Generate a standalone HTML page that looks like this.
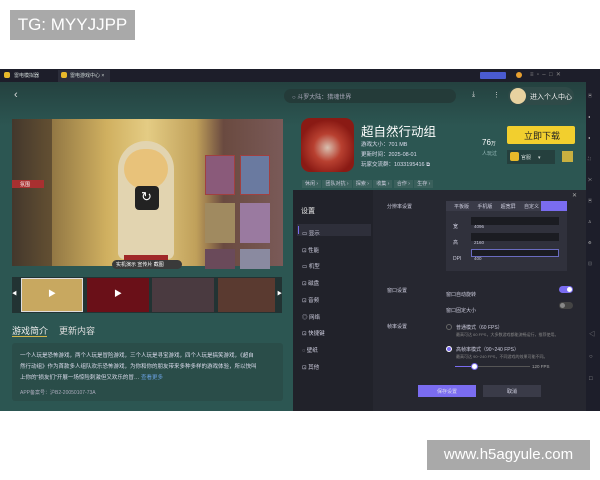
<!DOCTYPE html>
<html><head><meta charset="utf-8"><style>
*{margin:0;padding:0;box-sizing:border-box}
body{width:600px;height:480px;background:#fff;position:relative;overflow:hidden;font-family:"Liberation Sans","Noto Sans CJK SC",sans-serif;}
.a{position:absolute}
.t{color:#cfd8d6;font-size:6px;white-space:nowrap}
</style></head><body>
<div class="a" style="left:10px;top:10px;width:125px;height:30px;background:#a9a9a9;color:#fff;font-size:17px;line-height:30px;text-align:center">TG: MYYJJPP</div>
<div class="a" style="left:427px;top:440px;width:163px;height:30px;background:#a9a9a9;color:#fff;font-size:15px;line-height:30px;text-align:center">www.h5agyule.com</div>

<div class="a" style="left:0;top:69px;width:600px;height:342px;background:#2c5652;overflow:hidden">
 <div class="a" style="left:0;top:0;width:600px;height:13px;background:#1d1e2a"></div>
 <div class="a" style="left:4px;top:3px;width:6px;height:6px;border-radius:2px;background:#e8b92a"></div>
 <div class="a t" style="left:14px;top:3px;font-size:5px">雷电模拟器</div>
 <div class="a" style="left:58px;top:1px;width:52px;height:12px;background:#2b2d3a"></div>
 <div class="a" style="left:61px;top:3px;width:6px;height:6px;border-radius:2px;background:#e8b92a"></div>
 <div class="a t" style="left:70px;top:3px;font-size:5px">雷电游戏中心 ×</div>
 <div class="a" style="left:480px;top:3px;width:26px;height:7px;background:#4a5bd0;border-radius:1px"></div>
 <div class="a" style="left:516px;top:3px;width:6px;height:6px;border-radius:3px;background:#e8a030"></div>
 <div class="a t" style="left:530px;top:2px;color:#888">≡ &nbsp;▫ &nbsp;– &nbsp;□ &nbsp;✕</div>
 <div class="a" style="left:0;top:13px;width:600px;height:44px;background:linear-gradient(#24413f,#2c5652)"></div>
 <div class="a t" style="left:14px;top:20px;font-size:11px;color:#ddd">‹</div>
 <div class="a" style="left:284px;top:20px;width:172px;height:14px;border-radius:7px;background:#243b39"></div>
 <div class="a t" style="left:292px;top:23px;font-size:6px;color:#aab">○ 斗罗大陆：猎魂世界</div>
 <div class="a t" style="left:472px;top:22px;font-size:7px;color:#ddd">⤓</div>
 <div class="a t" style="left:493px;top:22px;font-size:7px;color:#ddd">⋮</div>
 <div class="a" style="left:508px;top:18px;width:66px;height:18px;border-radius:9px;background:#2f4a48"></div>
 <div class="a" style="left:510px;top:19px;width:16px;height:16px;border-radius:8px;background:#e8d2a0"></div>
 <div class="a t" style="left:530px;top:23px;font-size:7px;color:#eee">进入个人中心</div>

 <!-- screenshot -->
 <div class="a" style="left:12px;top:50px;width:271px;height:147px;background:linear-gradient(90deg,#5a4c38 0,#8a7040 12%,#d0b060 35%,#e4cc84 50%,#c0a05a 68%,#6a4a40 78%,#7a5a58 100%)"></div>
 <div class="a" style="left:12px;top:50px;width:40px;height:147px;background:rgba(40,30,30,.45)"></div>
 <div class="a" style="left:12px;top:111px;width:32px;height:8px;background:#a83030"></div>
 <div class="a t" style="left:20px;top:112px;font-size:5px;color:#fff">氛围</div>
 <div class="a" style="left:118px;top:72px;width:56px;height:118px;border-radius:28px 28px 6px 6px;background:#e2d4b0"></div>
 <div class="a" style="left:124px;top:80px;width:44px;height:40px;border-radius:20px;background:#e8c27a"></div>
 <div class="a" style="left:135px;top:117px;width:24px;height:24px;border-radius:4px;background:#222"></div>
 <div class="a t" style="left:141px;top:120px;font-size:13px;color:#fff">↻</div>
 <div class="a" style="left:124px;top:186px;width:44px;height:9px;background:#a02828"></div>
 <div class="a" style="left:205px;top:86px;width:30px;height:40px;background:#8a5a7a;border:1px solid #a04040"></div>
 <div class="a" style="left:240px;top:86px;width:30px;height:40px;background:#6a7aa0;border:1px solid #a04040"></div>
 <div class="a" style="left:205px;top:134px;width:30px;height:40px;background:#a08a60"></div>
 <div class="a" style="left:240px;top:134px;width:30px;height:40px;background:#9a7aa0"></div>
 <div class="a" style="left:205px;top:180px;width:30px;height:20px;background:#6a4a5a"></div>
 <div class="a" style="left:240px;top:180px;width:30px;height:20px;background:#8a8aa0"></div>
 <div class="a" style="left:112px;top:191px;width:70px;height:9px;border-radius:5px;background:#3a3a3a"></div>
 <div class="a t" style="left:116px;top:192px;font-size:5px;color:#fff">实机演示 宣传片 截图</div>
 <!-- thumbs -->
 <div class="a" style="left:12px;top:208px;width:270px;height:36px;background:#233"></div>
 <div class="a" style="left:21px;top:209px;width:62px;height:34px;background:#c8a860;border:1px solid #ddd"></div>
 <div class="a" style="left:87px;top:209px;width:62px;height:34px;background:#6a1018"></div>
 <div class="a" style="left:152px;top:209px;width:62px;height:34px;background:#4a3a40"></div>
 <div class="a" style="left:218px;top:209px;width:57px;height:34px;background:#5a3a30"></div>
 <div class="a t" style="left:48px;top:219px;font-size:8px;color:#fff">▶</div>
 <div class="a t" style="left:114px;top:219px;font-size:8px;color:#fff">▶</div>
 <div class="a t" style="left:12px;top:221px;font-size:5px;color:#fff">◀</div>
 <div class="a t" style="left:277px;top:221px;font-size:5px;color:#fff">▶</div>
 <div class="a t" style="left:12px;top:255px;font-size:9px;color:#eee">游戏简介</div>
 <div class="a" style="left:12px;top:267px;width:35px;height:1px;background:#d4b44a"></div>
 <div class="a t" style="left:59px;top:255px;font-size:9px;color:#ddd">更新内容</div>
 <div class="a" style="left:12px;top:274px;width:271px;height:58px;background:#2a4d49;border-radius:3px"></div>
 <div class="a t" style="left:20px;top:282px;font-size:5.5px;line-height:11px;color:#dde">一个人玩是恐怖游戏，两个人玩是冒险游戏，三个人玩是寻宝游戏，四个人玩是搞笑游戏，《超自<br>然行动组》作为首款多人组队欢乐恐怖游戏，为你和你的朋友带来多种多样的游戏体验，所以快叫<br>上你的"损友们"开展一场惊险刺激但又欢乐的冒… <span style="color:#6aa0e0">查看更多</span></div>
 <div class="a t" style="left:20px;top:320px;font-size:5px;color:#aab">APP备案号：沪B2-20050107-73A</div>

 <!-- game info -->
 <div class="a" style="left:301px;top:49px;width:53px;height:54px;border-radius:9px;background:radial-gradient(circle at 50% 55%,#d8c0b0 0,#b84030 35%,#8a1a14 70%)"></div>
 <div class="a t" style="left:361px;top:52px;font-size:12.5px;color:#fff">超自然行动组</div>
 <div class="a t" style="left:361px;top:71px;font-size:5.5px;line-height:10px;color:#dde">游戏大小：701 MB<br>更新时间：2025-08-01<br>玩家交流群：1033195416 ⧉</div>
 <div class="a t" style="left:482px;top:69px;font-size:8px;color:#fff">76<span style="font-size:5px">万</span></div>
 <div class="a t" style="left:482px;top:81px;font-size:5px;color:#9bb">人玩过</div>
 <div class="a" style="left:507px;top:57px;width:68px;height:18px;background:#f2cf2e;border-radius:2px"></div>
 <div class="a t" style="left:524px;top:60px;font-size:9px;color:#222">立即下载</div>
 <div class="a" style="left:507px;top:81px;width:48px;height:14px;background:#25403e"></div>
 <div class="a" style="left:510px;top:83px;width:9px;height:9px;background:#e8b92a;border-radius:2px"></div>
 <div class="a t" style="left:521px;top:85px;font-size:5px">官服 &nbsp; &nbsp; ▾</div>
 <div class="a" style="left:562px;top:82px;width:11px;height:11px;background:#c8b040"></div>
 <div class="a t" style="left:302px;top:111px;font-size:5px;color:#ccd">
  <span style="background:#3a605c;padding:1px 3px">休闲 ›</span> <span style="background:#3a605c;padding:1px 3px">团队对抗 ›</span> <span style="background:#3a605c;padding:1px 3px">探索 ›</span> <span style="background:#3a605c;padding:1px 3px">收集 ›</span> <span style="background:#3a605c;padding:1px 3px">合作 ›</span> <span style="background:#3a605c;padding:1px 3px">生存 ›</span></div>

 <!-- right sidebar -->
 <div class="a" style="left:586px;top:13px;width:14px;height:329px;background:#1d1e2a"></div>
 <div class="a t" style="left:588px;top:16px;font-size:4px;line-height:21px;color:#bbb">▣<br>◂<br>◂<br>⛶<br>✂<br>▣<br>♙<br>⚙<br>▤</div>
 <div class="a t" style="left:589px;top:255px;font-size:6px;line-height:22px;color:#999">◁<br>○<br>□</div>

 <!-- settings panel -->
 <div class="a" style="left:293px;top:121px;width:293px;height:221px;background:#262730"></div>
 <div class="a" style="left:293px;top:121px;width:80px;height:221px;background:#21222a"></div>
 <div class="a t" style="left:301px;top:137px;font-size:7px;color:#eee">设置</div>
 <div class="a" style="left:297px;top:155px;width:74px;height:12px;background:#2e2f3a"></div>
 <div class="a" style="left:298px;top:157px;width:1px;height:8px;background:#7a6cf0"></div>
 <div class="a t" style="left:302px;top:157px;font-size:5.5px;line-height:16.7px;color:#ccd">▭ 显示<br>⊡ 性能<br>▭ 机型<br>⊡ 磁盘<br>⊡ 音频<br>◎ 网络<br>⊡ 快捷键<br>◌ 壁纸<br>⊡ 其他</div>
 <div class="a t" style="left:572px;top:123px;font-size:6px;color:#aaa">✕</div>
 <div class="a t" style="left:387px;top:134px;font-size:5px;color:#ccd">分辨率设置</div>
 <div class="a" style="left:446px;top:132px;width:121px;height:70px;background:#30313c"></div>
 <div class="a" style="left:446px;top:132px;width:121px;height:10px;background:#3a3b48"></div>
 <div class="a" style="left:541px;top:132px;width:26px;height:10px;background:#7a6cf0"></div>
 <div class="a t" style="left:454px;top:134px;font-size:5px;color:#ccd">平板版 &nbsp; &nbsp; &nbsp;手机版 &nbsp; &nbsp; &nbsp;超宽屏 &nbsp; &nbsp; &nbsp;自定义</div>
 <div class="a t" style="left:453px;top:150px;font-size:5px;line-height:16px;color:#ccd">宽<br>高<br>DPI</div>
 <div class="a" style="left:471px;top:148px;width:88px;height:8px;background:#1b1c22"></div>
 <div class="a" style="left:471px;top:164px;width:88px;height:8px;background:#1b1c22"></div>
 <div class="a" style="left:471px;top:180px;width:88px;height:8px;background:#1b1c22;border:1px solid #6a6cc0"></div>
 <div class="a t" style="left:474px;top:150px;font-size:4.5px;line-height:16px;color:#ccd">4096<br>2160<br>400</div>
 <div class="a t" style="left:387px;top:218px;font-size:5px;color:#ccd">窗口设置</div>
 <div class="a t" style="left:446px;top:218px;font-size:5px;line-height:16px;color:#ccd">窗口自动旋转<br>窗口固定大小</div>
 <div class="a" style="left:559px;top:217px;width:14px;height:7px;border-radius:4px;background:#7a6cf0"></div>
 <div class="a" style="left:567px;top:218px;width:5px;height:5px;border-radius:3px;background:#fff"></div>
 <div class="a" style="left:559px;top:233px;width:14px;height:7px;border-radius:4px;background:#444"></div>
 <div class="a" style="left:560px;top:234px;width:5px;height:5px;border-radius:3px;background:#888"></div>
 <div class="a t" style="left:387px;top:254px;font-size:5px;color:#ccd">帧率设置</div>
 <div class="a" style="left:446px;top:255px;width:6px;height:6px;border-radius:3px;border:1px solid #666"></div>
 <div class="a t" style="left:456px;top:255px;font-size:5px;color:#ccd">普通模式（60 FPS）</div>
 <div class="a t" style="left:456px;top:263px;font-size:4px;color:#888">最高可达 60 FPS，大多数游戏都能流畅运行，推荐使用。</div>
 <div class="a" style="left:446px;top:277px;width:6px;height:6px;border-radius:3px;background:#7a6cf0;border:1px solid #fff"></div>
 <div class="a t" style="left:456px;top:277px;font-size:5px;color:#ccd">高帧率模式（90~240 FPS）</div>
 <div class="a t" style="left:456px;top:285px;font-size:4px;color:#888">最高可达 90~240 FPS，不同游戏的效果可能不同。</div>
 <div class="a" style="left:455px;top:297px;width:75px;height:1px;background:#555"></div>
 <div class="a" style="left:455px;top:297px;width:20px;height:1px;background:#7a6cf0"></div>
 <div class="a" style="left:471px;top:294px;width:7px;height:7px;border-radius:4px;background:#fff;border:1px solid #7a6cf0"></div>
 <div class="a t" style="left:532px;top:295px;font-size:4.5px;color:#aaa">120 FPS</div>
 <div class="a" style="left:418px;top:316px;width:58px;height:12px;background:#7a6cf0"></div>
 <div class="a t" style="left:437px;top:319px;font-size:5px;color:#dde">保存设置</div>
 <div class="a" style="left:483px;top:316px;width:58px;height:12px;background:#3a3b48"></div>
 <div class="a t" style="left:507px;top:319px;font-size:5px;color:#dde">取消</div>
</div>
</body></html>
